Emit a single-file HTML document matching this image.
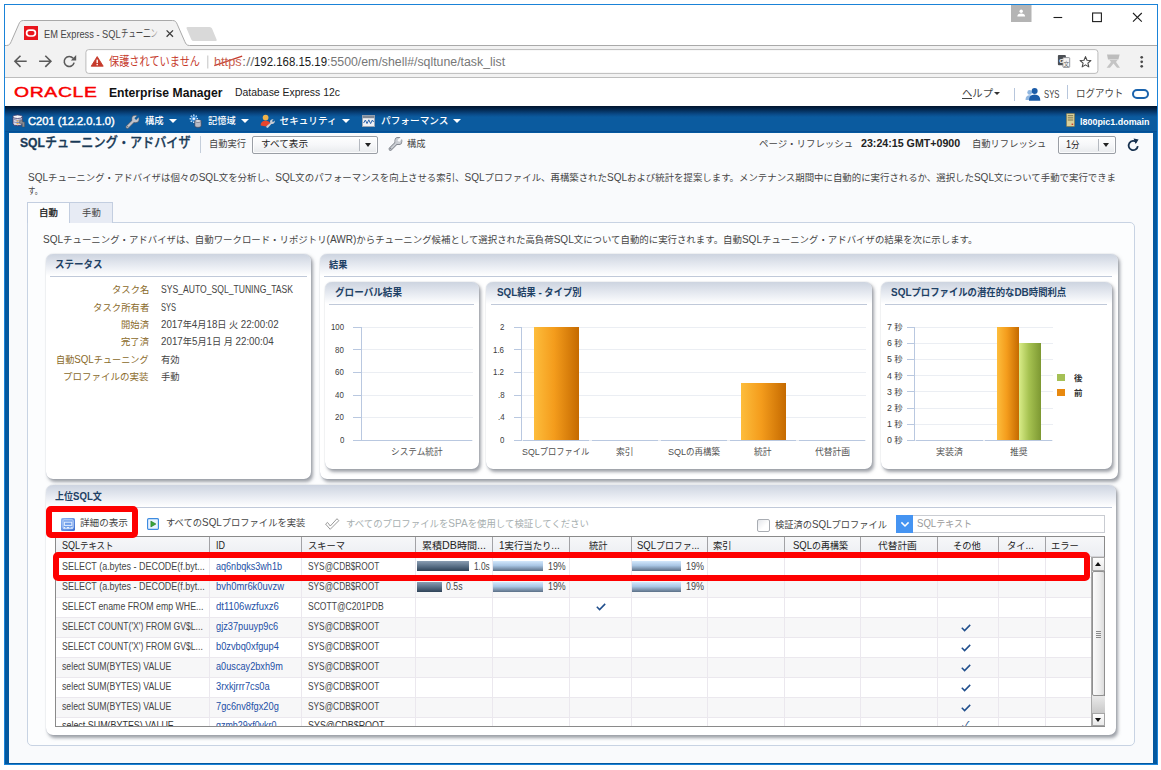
<!DOCTYPE html>
<html lang="ja">
<head>
<meta charset="utf-8">
<title>EM Express - SQLチューニング</title>
<style>
*{box-sizing:border-box;margin:0;padding:0}
html,body{width:1161px;height:770px;overflow:hidden;background:#fff}
body{position:relative;font-family:"Liberation Sans","Noto Sans CJK JP",sans-serif;font-size:9.4px;color:#333}
#win{position:absolute;left:4px;top:4px;width:1154px;height:761px;border:1px solid #1a83d8;background:#fff;overflow:hidden}
#in{position:absolute;left:-5px;top:-5px;width:1161px;height:770px}
#in div,#in span,#in svg{position:absolute;white-space:nowrap}
#in i{font-style:normal;font-size:1.065em}
.pn{border-radius:7px;background:#fff;box-shadow:2px 2.5px 3.5px rgba(95,100,112,.6),0 0 1px rgba(150,160,180,.8)}
.ph{left:0;top:0;right:0;height:22px;border-radius:7px 7px 0 0;background:linear-gradient(#cdd4e0,#ebeef4 60%,#fff)}
.ul{height:1.4px;background:#c0c9d9}
.gl{height:1px;background:#ebeef3}
.ax{background:#b9c8e0}
.or{background:linear-gradient(90deg,#fdbd3c,#f49c1c 45%,#c56a00)}
.gr{background:linear-gradient(90deg,#d9ec88,#a6c251 45%,#7d9832)}
.b1{height:10px;background:linear-gradient(#8a9db2,#5b7188 50%,#2f4358)}
.b2{height:10px;background:linear-gradient(#d3e8fc,#a9c6e4 45%,#5b6f86)}
.hc{top:0;height:21px;border-left:1px solid #c9c9c9}
.vl{width:1px;background:#ebe8ee}
.hl{height:1px;background:#ebe8ee}
</style>
</head>
<body>
<div id="win"><div id="in">
<div style="left:5px;top:5px;width:1152px;height:41px;background:#fff"></div>
<div style="left:5px;top:46px;width:1152px;height:32px;background:#f2f2f2;border-bottom:1px solid #bdbdbd"></div>
<svg style="left:5px;top:5px" width="1152" height="73" viewBox="5 5 1152 73">
<path d="M5,45.5 L6.5,45.5 C9.5,45.5 10.3,43.6 11.2,41.6 L18.8,24.2 C19.8,21.8 20.8,20.5 23.5,20.5 L172.5,20.5 C175.2,20.5 176.2,21.8 177.2,24.2 L184.8,41.6 C185.7,43.6 186.5,45.5 189.5,45.5 L1157,45.5 L1157,47 L5,47 Z" fill="#f2f2f2"/>
<path d="M5,45.5 L6.5,45.5 C9.5,45.5 10.3,43.6 11.2,41.6 L18.8,24.2 C19.8,21.8 20.8,20.5 23.5,20.5 L172.5,20.5 C175.2,20.5 176.2,21.8 177.2,24.2 L184.8,41.6 C185.7,43.6 186.5,45.5 189.5,45.5 L1157,45.5" fill="none" stroke="#a9a9a9" stroke-width="1"/>
<path d="M187.5,27 L209.5,27 Q211.3,27 212,28.6 L216.6,39.4 Q217.3,41 215.5,41 L193.8,41 Q192,41 191.3,39.4 L186.6,28.6 Q186,27 187.5,27 Z" fill="#d9d9d9"/>
<rect x="24" y="26" width="14" height="14" fill="#e9151d"/>
<rect x="26.6" y="30.2" width="8.8" height="5.8" rx="2.9" fill="none" stroke="#fff" stroke-width="1.7"/>
<path d="M166.6,30.4 L173,36.8 M173,30.4 L166.6,36.8" stroke="#3c3c3c" stroke-width="1.3" fill="none"/>
<rect x="1011" y="5" width="20.5" height="17" fill="#b4b4b4"/>
<circle cx="1021.2" cy="11.2" r="1.7" fill="#fff"/>
<path d="M1017.3,16.6 Q1017.3,13.4 1021.2,13.4 Q1025.1,13.4 1025.1,16.6 Z" fill="#fff"/>
<path d="M1053.5,17.5 L1062.2,17.5" stroke="#1e1e1e" stroke-width="1.1"/>
<rect x="1092.6" y="13" width="8.8" height="8.6" fill="none" stroke="#1e1e1e" stroke-width="1.1"/>
<path d="M1133,13 L1141.8,21.7 M1141.8,13 L1133,21.7" stroke="#1e1e1e" stroke-width="1.1" fill="none"/>
<!-- nav arrows -->
<path d="M26.7,61.3 L15.2,61.3 M20.5,55.7 L14.9,61.3 L20.5,66.9" stroke="#5a5a5a" stroke-width="1.6" fill="none"/>
<path d="M39.1,61.3 L50.6,61.3 M45.3,55.7 L50.9,61.3 L45.3,66.9" stroke="#5a5a5a" stroke-width="1.6" fill="none"/>
<path d="M73.1,58.3 A5,5 0 1 0 74.1,62.6" stroke="#5a5a5a" stroke-width="1.6" fill="none"/>
<path d="M70.8,60.4 L76.2,60.4 L76.2,55 Z" fill="#5a5a5a"/>
<!-- address bar -->
<rect x="85.9" y="49.6" width="1012" height="23.8" rx="2.8" fill="#fff" stroke="#b4b4b4" stroke-width="0.9"/>
<path d="M97.2,56.6 L103.2,66.2 L91.2,66.2 Z" fill="#c63a2b" stroke="#c63a2b" stroke-width="0.9" stroke-linejoin="round"/>
<rect x="96.5" y="59.6" width="1.4" height="3.4" fill="#fff"/>
<rect x="96.5" y="63.9" width="1.4" height="1.4" fill="#fff"/>
<path d="M207.8,55.5 L207.8,68.5" stroke="#c4c4c4" stroke-width="1"/>
<path d="M214.3,65.6 L242.2,56.2" stroke="#c63a2b" stroke-width="1.3"/>
<!-- right icons -->
<rect x="1057.9" y="54.9" width="8" height="10.4" rx="1" fill="#4c4f54"/>
<rect x="1062.9" y="57.6" width="6.8" height="9.8" rx="0.8" fill="#f4f4f4" stroke="#7d8085" stroke-width="0.8"/>
<text x="1059.2" y="62.6" font-size="6.2" font-weight="bold" fill="#fff" font-family="Liberation Sans,sans-serif">G</text>
<text x="1063.6" y="65.6" font-size="5.6" fill="#66696e" font-family="Liberation Sans,Noto Sans CJK JP,sans-serif">文</text>
<path d="M1085.5,56.6 L1087,60.2 L1090.9,60.5 L1087.9,63.1 L1088.8,66.9 L1085.5,64.9 L1082.2,66.9 L1083.1,63.1 L1080.1,60.5 L1084,60.2 Z" fill="none" stroke="#4a4a4a" stroke-width="1.1" stroke-linejoin="round"/>
<path d="M1107,54.6 L1119.6,54.6 L1118.4,59.6 L1108,59.6 Z" fill="#bdbdbd"/>
<path d="M1109.5,60 L1117.5,60 L1116,62 L1120,67.8 L1117,67.8 L1113.5,63.6 L1110,67.8 L1106.6,67.8 L1111,62 Z" fill="#c4c4c4"/>
<circle cx="1141.7" cy="57.3" r="1.35" fill="#4a4a4a"/><circle cx="1141.7" cy="61.8" r="1.35" fill="#4a4a4a"/><circle cx="1141.7" cy="66.3" r="1.35" fill="#4a4a4a"/>
</svg>
<span style="top:26.20px;font-size:10.6px;line-height:16px;color:#454545;left:44px;transform-origin:0 50%;transform:scaleX(0.8732);">EM Express - SQL</span>
<span style="top:26.20px;font-size:10.4px;line-height:16px;color:#454545;left:120.8px;transform-origin:0 50%;transform:scaleX(0.7122);">チュー二ン</span>
<div style="left:148px;top:27px;width:15px;height:15px;background:linear-gradient(90deg,rgba(242,242,242,0),#f2f2f2 80%)"></div>
<span style="top:52.50px;font-size:12px;line-height:18px;color:#c63a2b;left:109px;transform-origin:0 50%;transform:scaleX(0.8482);">保護されていません</span>
<span style="top:52.50px;font-size:12px;line-height:18px;color:#c8604f;left:214.3px;transform-origin:0 50%;transform:scaleX(1.0609);">https</span>
<span style="top:52.50px;font-size:12px;line-height:18px;color:#777;left:241.9px;transform-origin:0 50%;transform:scaleX(1.2381);">://</span>
<span style="top:52.50px;font-size:12px;line-height:18px;color:#1a1a1a;left:254.3px;transform-origin:0 50%;transform:scaleX(0.9511);">192.168.15.19</span>
<span style="top:52.50px;font-size:12px;line-height:18px;color:#777;left:327.3px;transform-origin:0 50%;transform:scaleX(1.0269);">:5500/em/shell#/sqltune/task_list</span>
<div style="left:5px;top:78px;width:1152px;height:28px;background:#fff"></div>
<span style="top:85.10px;font-size:14.2px;line-height:14px;color:#f80000;letter-spacing:0.5px;-webkit-text-stroke:0.45px #f80000;left:13.8px;transform-origin:0 50%;transform:scaleX(1.3612);">ORACLE</span>
<span style="top:83.60px;font-size:12px;line-height:18px;color:#111;font-weight:bold;left:109px;transform-origin:0 50%;transform:scaleX(1.0130);">Enterprise Manager</span>
<span style="top:84.80px;font-size:10.4px;line-height:16px;color:#222;left:235px;transform-origin:0 50%;transform:scaleX(1.0043);">Database Express 12c</span>
<span style="top:85.30px;font-size:10.6px;line-height:16px;color:#454545;left:962px;transform-origin:0 50%;transform:scaleX(0.9754);">ヘルプ</span>
<div style="left:994.2px;top:91.7px;width:0;height:0;border-left:3.2px solid transparent;border-right:3.2px solid transparent;border-top:3.5px solid #333"></div>
<div style="left:962px;top:97.6px;width:9.5px;height:1px;background:#444"></div>
<div style="left:1014px;top:88px;width:1px;height:12.5px;background:#b7c6dc"></div>
<svg style="left:1025px;top:87.2px" width="16.6" height="14.5" viewBox="0 0 16 14">
<circle cx="4.5" cy="5.2" r="2.3" fill="#8fb6e0"/><path d="M0.5,12.5 Q0.5,8 4.5,8 Q8.5,8 8.5,12.5 Z" fill="#8fb6e0"/>
<circle cx="9.3" cy="3.8" r="2.9" fill="#1c5ca8"/><path d="M3.8,13.2 Q3.8,7.3 9.3,7.3 Q14.8,7.3 14.8,13.2 Z" fill="#1c5ca8"/></svg>
<span style="top:86.50px;font-size:10.2px;line-height:15px;color:#454545;left:1044px;transform-origin:0 50%;transform:scaleX(0.7552);">SYS</span>
<div style="left:1067px;top:85px;width:1px;height:13.5px;background:#b7c6dc"></div>
<span style="top:85.30px;font-size:10.6px;line-height:16px;color:#454545;left:1076.3px;transform-origin:0 50%;transform:scaleX(0.8930);">ログアウト</span>
<div style="left:1131.5px;top:89.3px;width:17px;height:9.4px;border:2.3px solid #1a63ad;border-radius:5px"></div>
<div style="left:5px;top:106px;width:1152px;height:659px;background:#04589f"></div>
<div style="left:5px;top:106px;width:1152px;height:26px;background:#0b5b9f;border-bottom:1px solid #054e94"></div>
<div style="left:5px;top:106px;width:1152px;height:11px;background:linear-gradient(#00142b,#032b55 35%,#0a4a88 75%,#0b5b9f)"></div>
<svg style="left:11.5px;top:114px" width="14" height="13.5" viewBox="0 0 14 13.5">
<path d="M1,2.6 L1,9.9 Q1,11.7 5.6,11.7 Q10.2,11.7 10.2,9.9 L10.2,2.6 Z" fill="#dcdce8" stroke="#3f3a6a" stroke-width="0.9"/>
<ellipse cx="5.6" cy="2.7" rx="4.6" ry="1.8" fill="#f6f6fa" stroke="#3f3a6a" stroke-width="0.8"/>
<path d="M1.2,5.3 Q5.6,7.5 10,5.3 M1.2,7.8 Q5.6,10 10,7.8" stroke="#8c89aa" stroke-width="0.9" fill="none"/>
<rect x="4.6" y="6.4" width="2" height="1.3" fill="#e8a33a"/><rect x="4.6" y="9" width="2" height="1.3" fill="#e8a33a"/><rect x="4.6" y="7.8" width="2" height="0.9" fill="#5a8fd8"/>
<path d="M7.6,6.6 L10.6,6.6 L10.6,8 L12.6,8 L12.6,12.9 L10.2,12.9 L10.2,9.6 L7.6,9.6 Z" fill="#8a8d93" stroke="#4a4d55" stroke-width="0.5"/>
</svg>
<span style="top:113.20px;font-size:10.6px;line-height:16px;color:#fff;-webkit-text-stroke:0.4px #fff;left:27.7px;transform-origin:0 50%;transform:scaleX(1.0515);">C201 (12.2.0.1.0)</span>
<svg style="left:124.6px;top:114.5px" width="15" height="14" viewBox="0 0 15 14"><line x1="2.4" y1="12" x2="9.2" y2="5.2" stroke="#5d6673" stroke-width="3.4" stroke-linecap="round"/><circle cx="10.4" cy="4" r="3.9" fill="#5d6673"/><line x1="2.4" y1="12" x2="9.2" y2="5.2" stroke="#bfc3cb" stroke-width="2.2" stroke-linecap="round"/><circle cx="10.4" cy="4" r="3.3" fill="#bfc3cb"/><rect x="10.2" y="2.8" width="5.5" height="2.4" transform="rotate(-45 10.4 4)" fill="#0b5b9f"/><circle cx="2.7" cy="11.7" r="0.6" fill="#5d6673"/></svg>
<span style="top:113.80px;font-size:9.6px;line-height:14px;color:#fff;font-weight:500;left:144.5px;transform-origin:0 50%;transform:scaleX(0.9694);">構成</span>
<div style="left:168.6px;top:118.6px;width:0;height:0;border-left:4.2px solid transparent;border-right:4.2px solid transparent;border-top:4.4px solid #fff"></div>
<svg style="left:189.3px;top:114.3px" width="13" height="14" viewBox="0 0 13 14">
<g stroke="#cfe6fb" stroke-width="1.5"><path d="M4.8,0.6 L4.8,9 M0.6,4.8 L9,4.8 M1.8,1.8 L7.8,7.8 M7.8,1.8 L1.8,7.8"/></g>
<circle cx="4.8" cy="4.8" r="3" fill="#3f8fd8"/><circle cx="4.8" cy="4.8" r="1.3" fill="#e9f4ff"/>
<path d="M5.8,7 L5.8,12 Q5.8,13.4 9,13.4 Q12.2,13.4 12.2,12 L12.2,7 Z" fill="#b9bcc8" stroke="#3a3f55" stroke-width="0.7"/>
<ellipse cx="9" cy="7" rx="3.2" ry="1.3" fill="#eceef3" stroke="#3a3f55" stroke-width="0.6"/>
</svg>
<span style="top:113.80px;font-size:9.6px;line-height:14px;color:#fff;font-weight:500;left:208px;transform-origin:0 50%;transform:scaleX(0.9590);">記憶域</span>
<div style="left:240.6px;top:118.6px;width:0;height:0;border-left:4.2px solid transparent;border-right:4.2px solid transparent;border-top:4.4px solid #fff"></div>
<svg style="left:260px;top:114px" width="15" height="14" viewBox="0 0 15 14">
<circle cx="5.6" cy="3.6" r="2.9" fill="#f0b24a"/>
<path d="M0.6,11.6 Q0.6,6.8 5.6,6.8 Q9.4,6.8 10.2,9.4 L6,12.4 Z" fill="#e8452c"/>
<path d="M13.6,5.4 A2.6,2.6 0 0 0 10.3,8.9 L6.6,12 A1.1,1.1 0 0 0 8.2,13.6 L11.4,9.9 A2.6,2.6 0 0 0 14.6,6.6 L13.1,8.1 L11.9,7 Z" fill="#c9ccd3"/>
</svg>
<span style="top:113.80px;font-size:9.6px;line-height:14px;color:#fff;font-weight:500;left:279.6px;transform-origin:0 50%;transform:scaleX(1.0000);">セキュリティ</span>
<div style="left:341.6px;top:118.6px;width:0;height:0;border-left:4.2px solid transparent;border-right:4.2px solid transparent;border-top:4.4px solid #fff"></div>
<svg style="left:362px;top:115px" width="13" height="12" viewBox="0 0 13 12">
<rect x="0.4" y="0.4" width="12.2" height="11.2" fill="#eef1f5" stroke="#9aa3b0" stroke-width="0.8"/>
<rect x="0.8" y="0.8" width="11.4" height="2.4" fill="#7d8896"/>
<path d="M1.6,8 L3.4,5 L5,8.6 L6.8,4.8 L8.6,8.6 L10.4,5 L11.6,7" stroke="#2e66ad" stroke-width="1" fill="none"/>
</svg>
<span style="top:113.80px;font-size:9.6px;line-height:14px;color:#fff;font-weight:500;left:380.5px;transform-origin:0 50%;transform:scaleX(1.0079);">パフォーマンス</span>
<div style="left:452.8px;top:118.6px;width:0;height:0;border-left:4.2px solid transparent;border-right:4.2px solid transparent;border-top:4.4px solid #fff"></div>
<svg style="left:1066px;top:113.3px" width="9" height="14" viewBox="0 0 9 14">
<rect x="0.4" y="0.4" width="8.2" height="13.2" rx="0.8" fill="#d8cf9a" stroke="#7d7752" stroke-width="0.8"/>
<rect x="1.8" y="2" width="5.4" height="1.2" fill="#8c865c"/><rect x="1.8" y="4.2" width="5.4" height="1.2" fill="#8c865c"/><rect x="1.8" y="6.4" width="5.4" height="1.2" fill="#8c865c"/>
<rect x="5.6" y="10.6" width="1.6" height="1.4" fill="#d23a2a"/>
</svg>
<span style="top:114.60px;font-size:9.4px;line-height:14px;color:#fff;font-weight:bold;left:1080.3px;transform-origin:0 50%;transform:scaleX(0.9527);">l800pic1.domain</span>
<div style="left:9px;top:133px;width:1144px;height:630px;background:#f9fafc"></div>
<span style="top:132.80px;font-size:13.3px;line-height:20px;color:#1a3a57;font-weight:500;-webkit-text-stroke:0.3px #1a3a57;left:19.6px;transform-origin:0 50%;transform:scaleX(0.9128);"><b>SQL</b>チューニング・アドバイザ</span>
<div style="left:200px;top:136px;width:1px;height:17px;background:#c5cedb"></div>
<span style="top:136.80px;font-size:9.4px;line-height:14px;color:#454545;left:209px;transform-origin:0 50%;transform:scaleX(0.9863);">自動実行</span>
<div style="left:252px;top:135.5px;width:125.5px;height:18px;border:1px solid #9a9ea5;border-radius:2px;background:linear-gradient(#fefefe,#f6f7f9 50%,#e8eaed);box-shadow:inset 0 0 0 1px rgba(255,255,255,.8)"></div>
<div style="left:359px;top:138.5px;width:1px;height:12px;background:#b5b9c0"></div>
<span style="top:137.20px;font-size:9.4px;line-height:14px;color:#222;left:261px;transform-origin:0 50%;transform:scaleX(1.0252);">すべて表示</span>
<div style="left:365px;top:142.6px;width:0;height:0;border-left:3.1px solid transparent;border-right:3.1px solid transparent;border-top:4.4px solid #222"></div>
<svg style="left:387.5px;top:137px" width="15" height="14" viewBox="0 0 15 14"><line x1="2.4" y1="12" x2="9.2" y2="5.2" stroke="#6f747c" stroke-width="3.4" stroke-linecap="round"/><circle cx="10.4" cy="4" r="3.9" fill="#6f747c"/><line x1="2.4" y1="12" x2="9.2" y2="5.2" stroke="#c9ccd2" stroke-width="2.2" stroke-linecap="round"/><circle cx="10.4" cy="4" r="3.3" fill="#c9ccd2"/><rect x="10.2" y="2.8" width="5.5" height="2.4" transform="rotate(-45 10.4 4)" fill="#f9fafc"/><circle cx="2.7" cy="11.7" r="0.6" fill="#6f747c"/></svg>
<span style="top:136.80px;font-size:9.4px;line-height:14px;color:#454545;left:406.7px;transform-origin:0 50%;transform:scaleX(0.9912);">構成</span>
<span style="top:136.80px;font-size:9.4px;line-height:14px;color:#454545;left:758.8px;transform-origin:0 50%;transform:scaleX(1.0066);">ページ・リフレッシュ</span>
<span style="top:136.80px;font-size:9.6px;line-height:14px;color:#222;font-weight:bold;left:860.8px;transform-origin:0 50%;transform:scaleX(1.0425);"><i>23:24:15 GMT+0900</i></span>
<span style="top:136.80px;font-size:9.4px;line-height:14px;color:#454545;left:972px;transform-origin:0 50%;transform:scaleX(0.9905);">自動リフレッシュ</span>
<div style="left:1058px;top:136px;width:58px;height:17.8px;border:1px solid #9a9ea5;border-radius:2px;background:linear-gradient(#fefefe,#f6f7f9 50%,#e8eaed);box-shadow:inset 0 0 0 1px rgba(255,255,255,.8)"></div>
<div style="left:1097.5px;top:139px;width:1px;height:11.8px;background:#b5b9c0"></div>
<span style="top:138.00px;font-size:9.4px;line-height:14px;color:#222;left:1066px;transform-origin:0 50%;transform:scaleX(0.9028);"><i>1</i>分</span>
<div style="left:1103.2px;top:143.4px;width:0;height:0;border-left:3.1px solid transparent;border-right:3.1px solid transparent;border-top:4.4px solid #222"></div>
<svg style="left:1126.4px;top:138.4px" width="14" height="14" viewBox="0 0 14 14">
<path d="M10.6,4.4 A4.6,4.6 0 1 0 11.8,8.2" stroke="#17314f" stroke-width="1.8" fill="none"/>
<path d="M7.6,0.6 L12.6,1.6 L9.6,6 Z" fill="#17314f"/></svg>
<span style="top:170.90px;font-size:9.4px;line-height:14px;color:#454545;left:28px;transform-origin:0 50%;transform:scaleX(1.0037);"><i>SQL</i>チューニング・アドバイザは個々の<i>SQL</i>文を分析し、<i>SQL</i>文のパフォーマンスを向上させる索引、<i>SQL</i>プロファイル、再構築された<i>SQL</i>および統計を提案します。メンテナンス期間中に自動的に実行されるか、選択した<i>SQL</i>文について手動で実行できま</span>
<span style="top:183.70px;font-size:9.4px;line-height:14px;color:#454545;left:28px;transform-origin:0 50%;transform:scaleX(0.7860);">す。</span>
<div style="left:27px;top:222px;width:1108px;height:524px;border:1px solid #c8d3e3;border-radius:0 5px 5px 5px;background:#fcfdfe"></div>
<div style="left:69px;top:202px;width:44px;height:20.5px;border:1px solid #c3cee0;border-bottom:none;background:#e7ebf4"></div>
<div style="left:27px;top:202px;width:43px;height:21px;border:1px solid #c3cee0;border-bottom:none;background:#fcfdfe"></div>
<span style="top:205.80px;font-size:9.4px;line-height:14px;color:#222;font-weight:500;-webkit-text-stroke:0.2px #222;left:39px;transform-origin:0 50%;transform:scaleX(1.0018);">自動</span>
<span style="top:205.50px;font-size:9.4px;line-height:14px;color:#454545;left:81.5px;transform-origin:0 50%;transform:scaleX(1.0018);">手動</span>
<span style="top:232.90px;font-size:9.4px;line-height:14px;color:#454545;left:42.6px;transform-origin:0 50%;transform:scaleX(1.0037);"><i>SQL</i>チューニング・アドバイザは、自動ワークロード・リポジトリ<i>(AWR)</i>からチューニング候補として選択された高負荷<i>SQL</i>文について自動的に実行されます。自動<i>SQL</i>チューニング・アドバイザの結果を次に示します。</span>
<div class="pn" style="left:45.5px;top:254px;width:265.5px;height:224.5px"><div class="ph"></div></div>
<span style="top:257.30px;font-size:10.2px;line-height:15px;color:#1e4165;font-weight:bold;left:55.3px;transform-origin:0 50%;transform:scaleX(0.9306);">ステータス</span>
<div class="ul" style="left:49.8px;top:275.5px;width:256.9px"></div>
<span style="top:283.20px;font-size:9.4px;line-height:14px;color:#8a6a2a;left:111.6px;transform-origin:0 50%;transform:scaleX(0.9969);">タスク名</span>
<span style="top:283.20px;font-size:9.4px;line-height:14px;color:#454545;left:160.6px;transform-origin:0 50%;transform:scaleX(0.8595);"><i>SYS_AUTO_SQL_TUNING_TASK</i></span>
<span style="top:300.60px;font-size:9.4px;line-height:14px;color:#8a6a2a;left:92.6px;transform-origin:0 50%;transform:scaleX(1.0024);">タスク所有者</span>
<span style="top:300.60px;font-size:9.4px;line-height:14px;color:#454545;left:160.6px;transform-origin:0 50%;transform:scaleX(0.7494);"><i>SYS</i></span>
<span style="top:318.00px;font-size:9.4px;line-height:14px;color:#8a6a2a;left:121px;transform-origin:0 50%;transform:scaleX(0.9950);">開始済</span>
<span style="top:318.00px;font-size:9.4px;line-height:14px;color:#454545;left:160.6px;transform-origin:0 50%;transform:scaleX(0.9758);"><i>2017</i>年<i>4</i>月<i>18</i>日 火 <i>22:00:02</i></span>
<span style="top:335.40px;font-size:9.4px;line-height:14px;color:#8a6a2a;left:121px;transform-origin:0 50%;transform:scaleX(0.9950);">完了済</span>
<span style="top:335.40px;font-size:9.4px;line-height:14px;color:#454545;left:160.6px;transform-origin:0 50%;transform:scaleX(0.9786);"><i>2017</i>年<i>5</i>月<i>1</i>日 月 <i>22:00:04</i></span>
<span style="top:352.80px;font-size:9.4px;line-height:14px;color:#8a6a2a;left:56.400000000000006px;transform-origin:0 50%;transform:scaleX(0.9743);">自動<i>SQL</i>チューニング</span>
<span style="top:352.80px;font-size:9.4px;line-height:14px;color:#454545;left:160.6px;transform-origin:0 50%;transform:scaleX(0.9912);">有効</span>
<span style="top:370.20px;font-size:9.4px;line-height:14px;color:#8a6a2a;left:63.400000000000006px;transform-origin:0 50%;transform:scaleX(1.0143);">プロファイルの実装</span>
<span style="top:370.20px;font-size:9.4px;line-height:14px;color:#454545;left:160.6px;transform-origin:0 50%;transform:scaleX(0.9912);">手動</span>
<div class="pn" style="left:319.5px;top:254px;width:798px;height:224.5px"><div class="ph"></div></div>
<span style="top:257.80px;font-size:9.6px;line-height:14px;color:#1e4165;font-weight:bold;left:329px;transform-origin:0 50%;transform:scaleX(0.9590);">結果</span>
<div class="ul" style="left:324px;top:275.5px;width:788px"></div>
<div class="pn" style="left:324.5px;top:282.3px;width:154px;height:186.6px"><div class="ph"></div></div>
<span style="top:285.10px;font-size:10.2px;line-height:15px;color:#1e4165;font-weight:bold;left:334.5px;transform-origin:0 50%;transform:scaleX(0.9408);">グローバル結果</span>
<div class="ul" style="left:329px;top:304px;width:144.60000000000002px"></div>
<div class="pn" style="left:486px;top:282.3px;width:385.5px;height:186.6px"><div class="ph"></div></div>
<span style="top:285.10px;font-size:10.2px;line-height:15px;color:#1e4165;font-weight:bold;left:496.5px;transform-origin:0 50%;transform:scaleX(0.9109);"><i>SQL</i>結果 <i>-</i> タイプ別</span>
<div class="ul" style="left:491px;top:304px;width:375.5px"></div>
<div class="pn" style="left:881px;top:282.3px;width:231px;height:186.6px"><div class="ph"></div></div>
<span style="top:285.10px;font-size:10.2px;line-height:15px;color:#1e4165;font-weight:bold;left:890.8px;transform-origin:0 50%;transform:scaleX(0.9181);"><i>SQL</i>プロファイルの潜在的な<i>DB</i>時間利点</span>
<div class="ul" style="left:885px;top:304px;width:222px"></div>
<div class="gl" style="left:361px;top:326.80px;width:112px"></div>
<div class="ax" style="left:353.4px;top:326.80px;width:7.600000000000023px;height:1px"></div>
<span style="top:321.00px;font-size:7.9px;line-height:12px;color:#3c3c3c;left:331px;transform-origin:0 50%;transform:scaleX(0.9265);"><i>100</i></span>
<div class="gl" style="left:361px;top:349.38px;width:112px"></div>
<div class="ax" style="left:353.4px;top:349.38px;width:7.600000000000023px;height:1px"></div>
<span style="top:343.58px;font-size:7.9px;line-height:12px;color:#3c3c3c;left:335.2px;transform-origin:0 50%;transform:scaleX(0.9402);"><i>80</i></span>
<div class="gl" style="left:361px;top:371.96px;width:112px"></div>
<div class="ax" style="left:353.4px;top:371.96px;width:7.600000000000023px;height:1px"></div>
<span style="top:366.16px;font-size:7.9px;line-height:12px;color:#3c3c3c;left:335.2px;transform-origin:0 50%;transform:scaleX(0.9402);"><i>60</i></span>
<div class="gl" style="left:361px;top:394.54px;width:112px"></div>
<div class="ax" style="left:353.4px;top:394.54px;width:7.600000000000023px;height:1px"></div>
<span style="top:388.74px;font-size:7.9px;line-height:12px;color:#3c3c3c;left:335.2px;transform-origin:0 50%;transform:scaleX(0.9402);"><i>40</i></span>
<div class="gl" style="left:361px;top:417.12px;width:112px"></div>
<div class="ax" style="left:353.4px;top:417.12px;width:7.600000000000023px;height:1px"></div>
<span style="top:411.32px;font-size:7.9px;line-height:12px;color:#3c3c3c;left:335.2px;transform-origin:0 50%;transform:scaleX(0.9402);"><i>20</i></span>
<div class="gl" style="left:361px;top:439.70px;width:112px"></div>
<div class="ax" style="left:353.4px;top:439.70px;width:7.600000000000023px;height:1px"></div>
<span style="top:433.90px;font-size:7.9px;line-height:12px;color:#3c3c3c;left:339.6px;transform-origin:0 50%;transform:scaleX(0.9387);"><i>0</i></span>
<div class="ax" style="left:360.5px;top:326.8px;width:1px;height:113.89999999999998px"></div>
<div class="ax" style="left:361px;top:439.7px;width:111px;height:1px"></div>
<span style="top:445.50px;font-size:8.7px;line-height:13px;color:#555;left:391px;transform-origin:0 50%;transform:scaleX(0.9966);">システム統計</span>
<div class="gl" style="left:521.6px;top:326.80px;width:344.9px"></div>
<div class="ax" style="left:514.3px;top:326.80px;width:7.300000000000068px;height:1px"></div>
<span style="top:321.00px;font-size:7.9px;line-height:12px;color:#3c3c3c;left:499.90000000000003px;transform-origin:0 50%;transform:scaleX(0.9387);"><i>2</i></span>
<div class="gl" style="left:521.6px;top:349.38px;width:344.9px"></div>
<div class="ax" style="left:514.3px;top:349.38px;width:7.300000000000068px;height:1px"></div>
<span style="top:343.58px;font-size:7.9px;line-height:12px;color:#3c3c3c;left:493.3px;transform-origin:0 50%;transform:scaleX(0.9412);"><i>1.6</i></span>
<div class="gl" style="left:521.6px;top:371.96px;width:344.9px"></div>
<div class="ax" style="left:514.3px;top:371.96px;width:7.300000000000068px;height:1px"></div>
<span style="top:366.16px;font-size:7.9px;line-height:12px;color:#3c3c3c;left:493.3px;transform-origin:0 50%;transform:scaleX(0.9412);"><i>1.2</i></span>
<div class="gl" style="left:521.6px;top:394.54px;width:344.9px"></div>
<div class="ax" style="left:514.3px;top:394.54px;width:7.300000000000068px;height:1px"></div>
<span style="top:388.74px;font-size:7.9px;line-height:12px;color:#3c3c3c;left:497.7px;transform-origin:0 50%;transform:scaleX(0.9408);"><i>.8</i></span>
<div class="gl" style="left:521.6px;top:417.12px;width:344.9px"></div>
<div class="ax" style="left:514.3px;top:417.12px;width:7.300000000000068px;height:1px"></div>
<span style="top:411.32px;font-size:7.9px;line-height:12px;color:#3c3c3c;left:497.7px;transform-origin:0 50%;transform:scaleX(0.9408);"><i>.4</i></span>
<div class="gl" style="left:521.6px;top:439.70px;width:344.9px"></div>
<div class="ax" style="left:514.3px;top:439.70px;width:7.300000000000068px;height:1px"></div>
<span style="top:433.90px;font-size:7.9px;line-height:12px;color:#3c3c3c;left:499.90000000000003px;transform-origin:0 50%;transform:scaleX(0.9387);"><i>0</i></span>
<div class="ax" style="left:521.1px;top:326.8px;width:1px;height:113.89999999999998px"></div>
<div class="ax" style="left:522.8px;top:439.7px;width:66.6px;height:1px"></div>
<div class="ax" style="left:591.8px;top:439.7px;width:66.6px;height:1px"></div>
<div class="ax" style="left:660.8px;top:439.7px;width:66.6px;height:1px"></div>
<div class="ax" style="left:729.8px;top:439.7px;width:66.6px;height:1px"></div>
<div class="ax" style="left:798.8px;top:439.7px;width:66.6px;height:1px"></div>
<div class="or" style="left:534.2px;top:326.9px;width:44.4px;height:113.3px"></div>
<div class="or" style="left:741.2px;top:383.3px;width:44.4px;height:56.9px"></div>
<span style="top:445.50px;font-size:8.7px;line-height:13px;color:#505050;left:522.45px;transform-origin:0 50%;transform:scaleX(0.9527);"><i>SQL</i>プロファイル</span>
<span style="top:445.50px;font-size:8.7px;line-height:13px;color:#505050;left:616.3000000000001px;transform-origin:0 50%;transform:scaleX(1.0129);">索引</span>
<span style="top:445.50px;font-size:8.7px;line-height:13px;color:#505050;left:668.1px;transform-origin:0 50%;transform:scaleX(0.9762);"><i>SQL</i>の再構築</span>
<span style="top:445.50px;font-size:8.7px;line-height:13px;color:#505050;left:754.3000000000001px;transform-origin:0 50%;transform:scaleX(1.0129);">統計</span>
<span style="top:445.50px;font-size:8.7px;line-height:13px;color:#505050;left:814.6px;transform-origin:0 50%;transform:scaleX(1.0072);">代替計画</span>
<div class="gl" style="left:914.7px;top:327.00px;width:138.29999999999995px"></div>
<div class="ax" style="left:907px;top:327.00px;width:7.7000000000000455px;height:1px"></div>
<span style="top:321.20px;font-size:8.0px;line-height:12px;color:#3c3c3c;left:887.0px;transform-origin:0 50%;transform:scaleX(1.0344);"><i>7</i> 秒</span>
<div class="gl" style="left:914.7px;top:343.11px;width:138.29999999999995px"></div>
<div class="ax" style="left:907px;top:343.11px;width:7.7000000000000455px;height:1px"></div>
<span style="top:337.31px;font-size:8.0px;line-height:12px;color:#3c3c3c;left:887.0px;transform-origin:0 50%;transform:scaleX(1.0344);"><i>6</i> 秒</span>
<div class="gl" style="left:914.7px;top:359.23px;width:138.29999999999995px"></div>
<div class="ax" style="left:907px;top:359.23px;width:7.7000000000000455px;height:1px"></div>
<span style="top:353.43px;font-size:8.0px;line-height:12px;color:#3c3c3c;left:887.0px;transform-origin:0 50%;transform:scaleX(1.0344);"><i>5</i> 秒</span>
<div class="gl" style="left:914.7px;top:375.34px;width:138.29999999999995px"></div>
<div class="ax" style="left:907px;top:375.34px;width:7.7000000000000455px;height:1px"></div>
<span style="top:369.54px;font-size:8.0px;line-height:12px;color:#3c3c3c;left:887.0px;transform-origin:0 50%;transform:scaleX(1.0344);"><i>4</i> 秒</span>
<div class="gl" style="left:914.7px;top:391.46px;width:138.29999999999995px"></div>
<div class="ax" style="left:907px;top:391.46px;width:7.7000000000000455px;height:1px"></div>
<span style="top:385.66px;font-size:8.0px;line-height:12px;color:#3c3c3c;left:887.0px;transform-origin:0 50%;transform:scaleX(1.0344);"><i>3</i> 秒</span>
<div class="gl" style="left:914.7px;top:407.57px;width:138.29999999999995px"></div>
<div class="ax" style="left:907px;top:407.57px;width:7.7000000000000455px;height:1px"></div>
<span style="top:401.77px;font-size:8.0px;line-height:12px;color:#3c3c3c;left:887.0px;transform-origin:0 50%;transform:scaleX(1.0344);"><i>2</i> 秒</span>
<div class="gl" style="left:914.7px;top:423.69px;width:138.29999999999995px"></div>
<div class="ax" style="left:907px;top:423.69px;width:7.7000000000000455px;height:1px"></div>
<span style="top:417.89px;font-size:8.0px;line-height:12px;color:#3c3c3c;left:887.0px;transform-origin:0 50%;transform:scaleX(1.0344);"><i>1</i> 秒</span>
<div class="gl" style="left:914.7px;top:439.80px;width:138.29999999999995px"></div>
<div class="ax" style="left:907px;top:439.80px;width:7.7000000000000455px;height:1px"></div>
<span style="top:434.00px;font-size:8.0px;line-height:12px;color:#3c3c3c;left:887.0px;transform-origin:0 50%;transform:scaleX(1.0344);"><i>0</i> 秒</span>
<div class="ax" style="left:914.2px;top:327.0px;width:1px;height:113.80000000000001px"></div>
<div class="ax" style="left:915.9px;top:439.8px;width:66.7px;height:1px"></div>
<div class="ax" style="left:985.0px;top:439.8px;width:66.7px;height:1px"></div>
<div class="or" style="left:996.5px;top:327px;width:22.3px;height:113.3px"></div>
<div class="gr" style="left:1018.8px;top:343.1px;width:22.4px;height:97.2px"></div>
<span style="top:445.50px;font-size:8.8px;line-height:13px;color:#505050;left:935.8px;transform-origin:0 50%;transform:scaleX(1.0225);">実装済</span>
<span style="top:445.50px;font-size:8.8px;line-height:13px;color:#505050;left:1009.6px;transform-origin:0 50%;transform:scaleX(0.9995);">推奨</span>
<div style="left:1057px;top:374px;width:8.3px;height:7.4px;background:#a5c055"></div>
<div style="left:1057px;top:389px;width:8.3px;height:7.4px;background:#e8890f"></div>
<span style="top:371.60px;font-size:8.3px;line-height:12px;color:#333;font-weight:bold;left:1074px;transform-origin:0 50%;transform:scaleX(1.0226);">後</span>
<span style="top:386.60px;font-size:8.3px;line-height:12px;color:#333;font-weight:bold;left:1074px;transform-origin:0 50%;transform:scaleX(1.0226);">前</span>
<div class="pn" style="left:45.8px;top:485px;width:1070.4px;height:250.3px"><div class="ph"></div></div>
<span style="top:488.90px;font-size:9.8px;line-height:15px;color:#1e4165;font-weight:bold;left:55.4px;transform-origin:0 50%;transform:scaleX(0.9208);">上位<i>SQL</i>文</span>
<div class="ul" style="left:50px;top:507px;width:1061.5px"></div>
<div style="left:61.3px;top:517.7px;width:13.5px;height:13.2px;border-radius:1.6px;background:linear-gradient(135deg,#8db5f6,#3a6ccd)"></div>
<svg style="left:61px;top:517.4px" width="14.2" height="14" viewBox="0 0 14.2 14">
<rect x="2" y="2.8" width="10.2" height="8.9" rx="1" fill="#6f9eea" stroke="#c4d9fa" stroke-width="0.9"/>
<rect x="3.4" y="5.2" width="7.4" height="3.2" fill="none" stroke="#e3eeff" stroke-width="1"/>
<rect x="2.6" y="10" width="9" height="1.5" fill="#e6f0ff"/>
<rect x="4" y="10.4" width="2" height="0.7" fill="#5b8be0"/><rect x="8" y="10.4" width="2.4" height="0.7" fill="#5b8be0"/>
</svg>
<span style="top:516.00px;font-size:9.6px;line-height:14px;color:#454545;left:80px;transform-origin:0 50%;transform:scaleX(0.9986);">詳細の表示</span>
<svg style="left:146.9px;top:517.6px" width="12.6" height="12.6" viewBox="0 0 13 13">
<rect x="0.6" y="0.6" width="11.2" height="11.2" rx="1.2" fill="#eaf4ff" stroke="#3d8be0" stroke-width="1.2"/>
<path d="M4,3.2 L9.2,6.2 L4,9.2 Z" fill="#3aa63a" stroke="#237a23" stroke-width="0.6"/>
</svg>
<span style="top:516.00px;font-size:9.6px;line-height:14px;color:#454545;left:166.4px;transform-origin:0 50%;transform:scaleX(0.9658);">すべての<i>SQL</i>プロファイルを実装</span>
<svg style="left:325px;top:517.5px" width="15" height="12.5" viewBox="0 0 15 12.5">
<path d="M0.6,6.1 L5.2,11.3 L13.8,2.7 L12,0.7 L5.3,8 L2.5,4.4 Z" fill="#fff" stroke="#8e8e8e" stroke-width="0.9" stroke-linejoin="round"/>
</svg>
<span style="top:516.60px;font-size:9.6px;line-height:14px;color:#a7afb0;left:346px;transform-origin:0 50%;transform:scaleX(0.9797);">すべてのプロファイルを<i>SPA</i>を使用して検証してください</span>
<div style="left:757px;top:519px;width:12.5px;height:12.5px;border:1px solid #a9adb3;border-radius:2px;background:linear-gradient(135deg,#e4e6ea,#fff 60%)"></div>
<span style="top:517.50px;font-size:9.6px;line-height:14px;color:#454545;left:775.4px;transform-origin:0 50%;transform:scaleX(0.9623);">検証済の<i>SQL</i>プロファイル</span>
<div style="left:896px;top:515.4px;width:208.5px;height:17.4px;border:1px solid #c9ccd2;background:#fff"></div>
<div style="left:896px;top:515.4px;width:17px;height:17.4px;background:#4594f2"></div>
<svg style="left:899.5px;top:520.5px" width="10" height="7" viewBox="0 0 10 7"><path d="M1.4,1.4 L5,5 L8.6,1.4" stroke="#fff" stroke-width="1.5" fill="none"/></svg>
<span style="top:517.00px;font-size:9.6px;line-height:14px;color:#9a9a9a;left:917.4px;transform-origin:0 50%;transform:scaleX(0.9394);"><i>SQL</i>テキスト</span>
<div style="left:55px;top:536px;width:1050px;height:191px;background:#fff;border:1px solid #8a8a8a"></div>
<div style="left:56px;top:537px;width:1048px;height:20px;background:linear-gradient(#f6f7f9,#eceef2);border-bottom:1px solid #d2d2d6"></div>
<div style="left:56px;top:577.05px;width:1035px;height:20.05px;background:#f7f7f8"></div>
<div style="left:56px;top:617.15px;width:1035px;height:20.05px;background:#f7f7f8"></div>
<div style="left:56px;top:657.25px;width:1035px;height:20.05px;background:#f7f7f8"></div>
<div style="left:56px;top:697.35px;width:1035px;height:20.05px;background:#f7f7f8"></div>
<div class="hl" style="left:56px;top:576.55px;width:1035px"></div>
<div class="hl" style="left:56px;top:596.60px;width:1035px"></div>
<div class="hl" style="left:56px;top:616.65px;width:1035px"></div>
<div class="hl" style="left:56px;top:636.70px;width:1035px"></div>
<div class="hl" style="left:56px;top:656.75px;width:1035px"></div>
<div class="hl" style="left:56px;top:676.80px;width:1035px"></div>
<div class="hl" style="left:56px;top:696.85px;width:1035px"></div>
<div class="hl" style="left:56px;top:716.90px;width:1035px"></div>
<div class="vl" style="left:209.0px;top:557px;width:1px;height:169px"></div>
<div style="left:209.0px;top:537px;width:1px;height:20px;background:#a2a2a6"></div>
<div class="vl" style="left:301.0px;top:557px;width:1px;height:169px"></div>
<div style="left:301.0px;top:537px;width:1px;height:20px;background:#a2a2a6"></div>
<div class="vl" style="left:414.8px;top:557px;width:1px;height:169px"></div>
<div style="left:414.8px;top:537px;width:1px;height:20px;background:#a2a2a6"></div>
<div class="vl" style="left:491.8px;top:557px;width:1px;height:169px"></div>
<div style="left:491.8px;top:537px;width:1px;height:20px;background:#a2a2a6"></div>
<div class="vl" style="left:569.0px;top:557px;width:1px;height:169px"></div>
<div style="left:569.0px;top:537px;width:1px;height:20px;background:#a2a2a6"></div>
<div class="vl" style="left:631.0px;top:557px;width:1px;height:169px"></div>
<div style="left:631.0px;top:537px;width:1px;height:20px;background:#a2a2a6"></div>
<div class="vl" style="left:706.8px;top:557px;width:1px;height:169px"></div>
<div style="left:706.8px;top:537px;width:1px;height:20px;background:#a2a2a6"></div>
<div class="vl" style="left:783.7px;top:557px;width:1px;height:169px"></div>
<div style="left:783.7px;top:537px;width:1px;height:20px;background:#a2a2a6"></div>
<div class="vl" style="left:860.0px;top:557px;width:1px;height:169px"></div>
<div style="left:860.0px;top:537px;width:1px;height:20px;background:#a2a2a6"></div>
<div class="vl" style="left:936.5px;top:557px;width:1px;height:169px"></div>
<div style="left:936.5px;top:537px;width:1px;height:20px;background:#a2a2a6"></div>
<div class="vl" style="left:998.1px;top:557px;width:1px;height:169px"></div>
<div style="left:998.1px;top:537px;width:1px;height:20px;background:#a2a2a6"></div>
<div class="vl" style="left:1044.5px;top:557px;width:1px;height:169px"></div>
<div style="left:1044.5px;top:537px;width:1px;height:20px;background:#a2a2a6"></div>
<span style="top:539.30px;font-size:9.6px;line-height:14px;color:#222;left:62.4px;transform-origin:0 50%;transform:scaleX(0.8796);"><i>SQL</i>テキスト</span>
<span style="top:539.30px;font-size:9.6px;line-height:14px;color:#222;left:216.3px;transform-origin:0 50%;transform:scaleX(0.8807);"><i>ID</i></span>
<span style="top:539.30px;font-size:9.6px;line-height:14px;color:#222;left:307.6px;transform-origin:0 50%;transform:scaleX(0.9642);">スキーマ</span>
<span style="top:539.30px;font-size:9.6px;line-height:14px;color:#222;left:422.0px;transform-origin:0 50%;transform:scaleX(1.0473);">累積<i>DB</i>時間<i>...</i></span>
<span style="top:539.30px;font-size:9.6px;line-height:14px;color:#222;left:499.15px;transform-origin:0 50%;transform:scaleX(0.9761);"><i>1</i>実行当たり<i>...</i></span>
<span style="top:539.30px;font-size:9.6px;line-height:14px;color:#222;left:588.8px;transform-origin:0 50%;transform:scaleX(0.9590);">統計</span>
<span style="top:539.30px;font-size:9.6px;line-height:14px;color:#222;left:636.55px;transform-origin:0 50%;transform:scaleX(0.9279);"><i>SQL</i>プロファ<i>...</i></span>
<span style="top:539.30px;font-size:9.6px;line-height:14px;color:#222;left:713.4px;transform-origin:0 50%;transform:scaleX(0.9694);">索引</span>
<span style="top:539.30px;font-size:9.6px;line-height:14px;color:#222;left:792.5px;transform-origin:0 50%;transform:scaleX(0.9349);"><i>SQL</i>の再構築</span>
<span style="top:539.30px;font-size:9.6px;line-height:14px;color:#222;left:878.1px;transform-origin:0 50%;transform:scaleX(1.0111);">代替計画</span>
<span style="top:539.30px;font-size:9.6px;line-height:14px;color:#222;left:952.9px;transform-origin:0 50%;transform:scaleX(0.9659);">その他</span>
<span style="top:539.30px;font-size:9.6px;line-height:14px;color:#222;left:1006.8000000000001px;transform-origin:0 50%;transform:scaleX(0.9669);">タイ<i>...</i></span>
<span style="top:539.30px;font-size:9.6px;line-height:14px;color:#222;left:1051px;transform-origin:0 50%;transform:scaleX(0.9659);">エラー</span>
<span style="top:559.60px;font-size:9.4px;line-height:14px;color:#454545;left:62.4px;transform-origin:0 50%;transform:scaleX(0.8957);"><i>SELECT (a.bytes - DECODE(f.byt...</i></span>
<span style="top:559.60px;font-size:9.4px;line-height:14px;color:#2450a6;left:216.3px;transform-origin:0 50%;transform:scaleX(0.9060);"><i>aq6nbqks3wh1b</i></span>
<span style="top:559.60px;font-size:9.4px;line-height:14px;color:#454545;left:307.6px;transform-origin:0 50%;transform:scaleX(0.8328);"><i>SYS@CDB$ROOT</i></span>
<span style="top:579.65px;font-size:9.4px;line-height:14px;color:#454545;left:62.4px;transform-origin:0 50%;transform:scaleX(0.8957);"><i>SELECT (a.bytes - DECODE(f.byt...</i></span>
<span style="top:579.65px;font-size:9.4px;line-height:14px;color:#2450a6;left:216.3px;transform-origin:0 50%;transform:scaleX(0.9410);"><i>bvh0mr6k0uvzw</i></span>
<span style="top:579.65px;font-size:9.4px;line-height:14px;color:#454545;left:307.6px;transform-origin:0 50%;transform:scaleX(0.8328);"><i>SYS@CDB$ROOT</i></span>
<span style="top:599.70px;font-size:9.4px;line-height:14px;color:#454545;left:62.4px;transform-origin:0 50%;transform:scaleX(0.8784);"><i>SELECT ename FROM emp WHE...</i></span>
<span style="top:599.70px;font-size:9.4px;line-height:14px;color:#2450a6;left:216.3px;transform-origin:0 50%;transform:scaleX(0.9520);"><i>dt1106wzfuxz6</i></span>
<span style="top:599.70px;font-size:9.4px;line-height:14px;color:#454545;left:307.6px;transform-origin:0 50%;transform:scaleX(0.8541);"><i>SCOTT@C201PDB</i></span>
<span style="top:619.75px;font-size:9.4px;line-height:14px;color:#454545;left:62.4px;transform-origin:0 50%;transform:scaleX(0.8632);"><i>SELECT COUNT('X') FROM GV$L...</i></span>
<span style="top:619.75px;font-size:9.4px;line-height:14px;color:#2450a6;left:216.3px;transform-origin:0 50%;transform:scaleX(0.9245);"><i>gjz37puuyp9c6</i></span>
<span style="top:619.75px;font-size:9.4px;line-height:14px;color:#454545;left:307.6px;transform-origin:0 50%;transform:scaleX(0.8328);"><i>SYS@CDB$ROOT</i></span>
<span style="top:639.80px;font-size:9.4px;line-height:14px;color:#454545;left:62.4px;transform-origin:0 50%;transform:scaleX(0.8632);"><i>SELECT COUNT('X') FROM GV$L...</i></span>
<span style="top:639.80px;font-size:9.4px;line-height:14px;color:#2450a6;left:216.3px;transform-origin:0 50%;transform:scaleX(0.9257);"><i>b0zvbq0xfgup4</i></span>
<span style="top:639.80px;font-size:9.4px;line-height:14px;color:#454545;left:307.6px;transform-origin:0 50%;transform:scaleX(0.8328);"><i>SYS@CDB$ROOT</i></span>
<span style="top:659.85px;font-size:9.4px;line-height:14px;color:#454545;left:62.4px;transform-origin:0 50%;transform:scaleX(0.8716);"><i>select SUM(BYTES) VALUE</i></span>
<span style="top:659.85px;font-size:9.4px;line-height:14px;color:#2450a6;left:216.3px;transform-origin:0 50%;transform:scaleX(0.9172);"><i>a0uscay2bxh9m</i></span>
<span style="top:659.85px;font-size:9.4px;line-height:14px;color:#454545;left:307.6px;transform-origin:0 50%;transform:scaleX(0.8328);"><i>SYS@CDB$ROOT</i></span>
<span style="top:679.90px;font-size:9.4px;line-height:14px;color:#454545;left:62.4px;transform-origin:0 50%;transform:scaleX(0.8716);"><i>select SUM(BYTES) VALUE</i></span>
<span style="top:679.90px;font-size:9.4px;line-height:14px;color:#2450a6;left:216.3px;transform-origin:0 50%;transform:scaleX(0.9291);"><i>3rxkjrrr7cs0a</i></span>
<span style="top:679.90px;font-size:9.4px;line-height:14px;color:#454545;left:307.6px;transform-origin:0 50%;transform:scaleX(0.8328);"><i>SYS@CDB$ROOT</i></span>
<span style="top:699.95px;font-size:9.4px;line-height:14px;color:#454545;left:62.4px;transform-origin:0 50%;transform:scaleX(0.8716);"><i>select SUM(BYTES) VALUE</i></span>
<span style="top:699.95px;font-size:9.4px;line-height:14px;color:#2450a6;left:216.3px;transform-origin:0 50%;transform:scaleX(0.9257);"><i>7gc6nv8fgx20g</i></span>
<span style="top:699.95px;font-size:9.4px;line-height:14px;color:#454545;left:307.6px;transform-origin:0 50%;transform:scaleX(0.8328);"><i>SYS@CDB$ROOT</i></span>
<div style="left:57px;top:721px;width:1034px;height:5px;overflow:hidden"><span style="left:5.4px;top:-2.2px;font-size:10.2px;line-height:14px;color:#333;transform-origin:0 50%;transform:scaleX(.875)">select SUM(BYTES) VALUE</span><span style="left:159.3px;top:-2.2px;font-size:10.2px;line-height:14px;color:#2450a6;transform-origin:0 50%;transform:scaleX(.875)">gzmb29xf0vkr0</span><span style="left:250.6px;top:-2.2px;font-size:10.2px;line-height:14px;color:#333;transform-origin:0 50%;transform:scaleX(.875)">SYS@CDB$ROOT</span><span style="left:905px;top:-3.4px;font-size:11px;line-height:14px;color:#1f4e8c">✓</span></div>
<div class="b1" style="left:416.5px;top:561.30px;width:52.5px"></div>
<span style="top:559.60px;font-size:9.4px;line-height:14px;color:#454545;left:473.9px;transform-origin:0 50%;transform:scaleX(0.8304);"><i>1.0s</i></span>
<div class="b2" style="left:493px;top:561.30px;width:50.3px"></div>
<span style="top:559.60px;font-size:9.4px;line-height:14px;color:#454545;left:548.3px;transform-origin:0 50%;transform:scaleX(0.8843);"><i>19%</i></span>
<div class="b2" style="left:631.5px;top:561.30px;width:49.5px"></div>
<span style="top:559.60px;font-size:9.4px;line-height:14px;color:#454545;left:685.5px;transform-origin:0 50%;transform:scaleX(0.8993);"><i>19%</i></span>
<div class="b1" style="left:416.5px;top:581.50px;width:25.5px"></div>
<span style="top:579.70px;font-size:9.4px;line-height:14px;color:#454545;left:446.3px;transform-origin:0 50%;transform:scaleX(0.8727);"><i>0.5s</i></span>
<div class="b2" style="left:493px;top:581.50px;width:50.3px"></div>
<span style="top:579.70px;font-size:9.4px;line-height:14px;color:#454545;left:548.3px;transform-origin:0 50%;transform:scaleX(0.8843);"><i>19%</i></span>
<div class="b2" style="left:631.5px;top:581.50px;width:49.5px"></div>
<span style="top:579.70px;font-size:9.4px;line-height:14px;color:#454545;left:685.5px;transform-origin:0 50%;transform:scaleX(0.8993);"><i>19%</i></span>
<svg style="left:595.5px;top:603.2px" width="10" height="8" viewBox="0 0 10 8"><path d="M0.8,3.8 L3.6,6.6 L9.2,0.9" stroke="#1f4e8c" stroke-width="1.5" fill="none"/></svg>
<svg style="left:961.3px;top:623.55px" width="10" height="8" viewBox="0 0 10 8"><path d="M0.8,3.8 L3.6,6.6 L9.2,0.9" stroke="#1f4e8c" stroke-width="1.5" fill="none"/></svg>
<svg style="left:961.3px;top:643.6px" width="10" height="8" viewBox="0 0 10 8"><path d="M0.8,3.8 L3.6,6.6 L9.2,0.9" stroke="#1f4e8c" stroke-width="1.5" fill="none"/></svg>
<svg style="left:961.3px;top:663.65px" width="10" height="8" viewBox="0 0 10 8"><path d="M0.8,3.8 L3.6,6.6 L9.2,0.9" stroke="#1f4e8c" stroke-width="1.5" fill="none"/></svg>
<svg style="left:961.3px;top:683.6999999999999px" width="10" height="8" viewBox="0 0 10 8"><path d="M0.8,3.8 L3.6,6.6 L9.2,0.9" stroke="#1f4e8c" stroke-width="1.5" fill="none"/></svg>
<svg style="left:961.3px;top:703.75px" width="10" height="8" viewBox="0 0 10 8"><path d="M0.8,3.8 L3.6,6.6 L9.2,0.9" stroke="#1f4e8c" stroke-width="1.5" fill="none"/></svg>
<div style="left:1091px;top:557px;width:13px;height:169px;background:linear-gradient(90deg,#e4e4e4,#f4f4f4 40%,#eee);border-left:1px solid #a9a9a9"></div>
<div style="left:1092px;top:557px;width:12.5px;height:13.6px;background:linear-gradient(#fdfdfd,#e9e9e9);border:1px solid #a5a5a5"></div>
<div style="left:1095.4px;top:561.6px;width:0;height:0;border-left:3px solid transparent;border-right:3px solid transparent;border-bottom:4px solid #111"></div>
<div style="left:1092px;top:570.6px;width:12.5px;height:125.4px;background:linear-gradient(90deg,#fbfbfb,#ededed 60%,#dcdcdc);border:1px solid #8f8f8f;border-radius:2px"></div>
<div style="left:1095.6px;top:630.6px;width:5.4px;height:1px;background:#8a8a8a"></div>
<div style="left:1095.6px;top:632.6px;width:5.4px;height:1px;background:#8a8a8a"></div>
<div style="left:1095.6px;top:634.6px;width:5.4px;height:1px;background:#8a8a8a"></div>
<div style="left:1095.6px;top:636.6px;width:5.4px;height:1px;background:#8a8a8a"></div>
<div style="left:1092px;top:696px;width:12.5px;height:16.7px;background:linear-gradient(#e9e9e9,#c9c9c9)"></div>
<div style="left:1092px;top:713px;width:12.5px;height:13px;background:linear-gradient(#fdfdfd,#e9e9e9);border:1px solid #a5a5a5"></div>
<div style="left:1095.4px;top:717.8px;width:0;height:0;border-left:3px solid transparent;border-right:3px solid transparent;border-top:4px solid #111"></div>
<div style="left:46px;top:506px;width:92px;height:32.3px;border:6px solid #fe0000;border-radius:5px"></div>
<div style="left:53.4px;top:551.8px;width:1037px;height:29px;border:6px solid #fe0000;border-radius:5px"></div>
</div></div>
</body>
</html>
